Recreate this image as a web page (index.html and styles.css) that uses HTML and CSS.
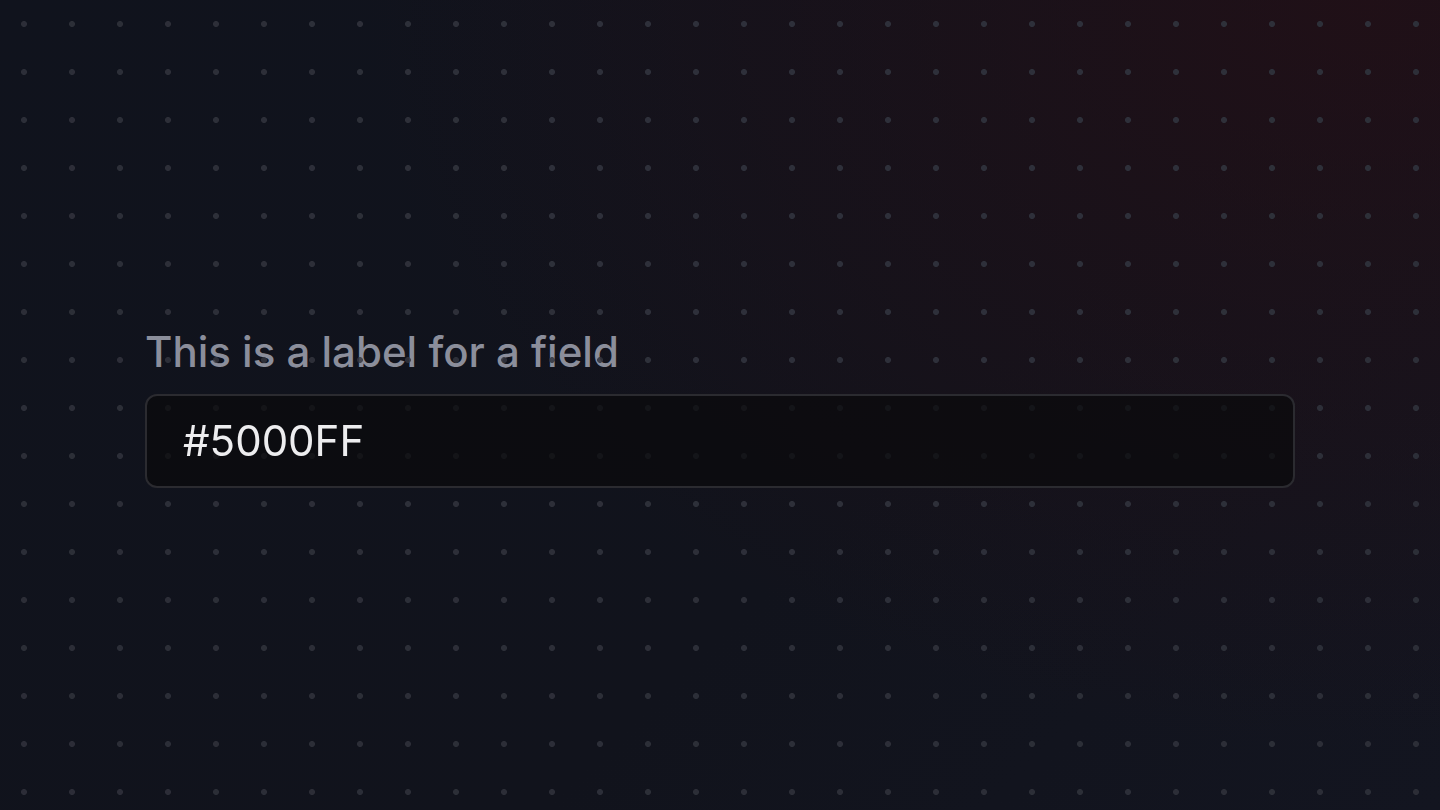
FILE: index.html
```html
<!DOCTYPE html>
<html lang="en">
<head>
    <meta charset="UTF-8">
    <meta name="viewport" content="width=device-width, initial-scale=1.0">
    <title>Field</title>
    <link rel="stylesheet" href="styles.css">
</head>
<body>
    <div class="dots"></div>
    <main class="page">
        <div class="field">
            <label class="field-label" for="colorInput">This is a label for a field</label>
            <input class="field-input" id="colorInput" type="text" value="#5000FF">
        </div>
    </main>
</body>
</html>
```

FILE: styles.css
```css
html, body {
    height: 100%;
}
body {
    margin: 0;
    font-family: Inter, "Noto Sans", sans-serif;
    background-color: #11131c;
    background-image:
        radial-gradient(circle, #25272f 2.6px, transparent 3.2px),
        radial-gradient(ellipse 1000px 750px at 95% 0%, rgba(42, 14, 20, 0.6), rgba(42, 14, 20, 0) 100%),
        linear-gradient(135deg, #10131d 0%, #11131c 60%, #131520 100%);
    background-size: 48px 48px, 100% 100%, 100% 100%;
    background-position: 0 0, 0 0, 0 0;
    overflow: hidden;
}
/* dot grid drawn over the label too */
.dots {
    position: fixed;
    inset: 0;
    z-index: 1;
    pointer-events: none;
    background-image: radial-gradient(circle, rgba(48, 50, 60, 0.85) 2.6px, transparent 3.2px);
    background-size: 48px 48px;
    -webkit-mask-image: radial-gradient(ellipse 1100px 800px at 60% 20%, #000 30%, rgba(0,0,0,0.7) 100%);
    mask-image: radial-gradient(ellipse 1100px 800px at 60% 20%, #000 30%, rgba(0,0,0,0.7) 100%);
}
.page {
    height: 100%;
    box-sizing: border-box;
    padding: 5px 145px 0;
    display: flex;
    flex-direction: column;
    justify-content: center;
}
.field {
    display: flex;
    flex-direction: column;
    gap: 18px;
}
.field-label {
    font-size: 42px;
    font-weight: 500;
    line-height: 48px;
    color: #8b8e9b;
}
.field-input {
    position: relative;
    z-index: 2;
    box-sizing: border-box;
    width: 100%;
    height: 94px;
    margin: 0;
    padding: 21px 36px;
    font-family: Inter, "Noto Sans", sans-serif;
    font-size: 42px;
    line-height: 48px;
    color: #ededef;
    background-color: rgba(10, 10, 12, 0.7);
    border: 2px solid #2b2b30;
    border-radius: 12px;
    outline: none;
}
```
